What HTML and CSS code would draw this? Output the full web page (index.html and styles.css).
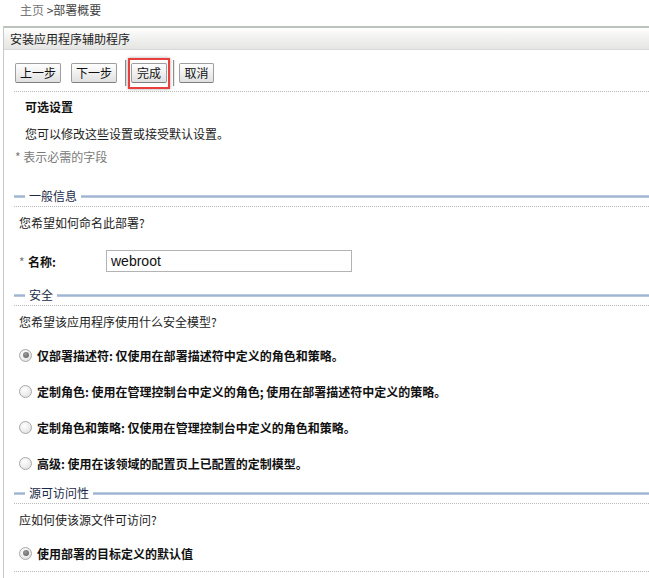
FILE: index.html
```html
<!DOCTYPE html>
<html lang="zh-CN">
<head>
<meta charset="utf-8">
<title>部署概要</title>
<link rel="stylesheet" href="styles.css">
</head>
<body>
<div class="crumb"><span class="crumb-home">主页</span> &gt;部署概要</div>
<div class="panel">
  <div class="panel-head">安装应用程序辅助程序</div>
  <div class="panel-body">
    <div class="toolbar">
      <button class="btn btn-3">上一步</button>
      <button class="btn btn-3 gap">下一步</button>
      <span class="sep sep-a"></span>
      <span class="mark"><button class="btn btn-2">完成</button></span>
      <span class="sep sep-b"></span>
      <button class="btn btn-2">取消</button>
    </div>
    <div class="dots d-top"></div>
    <div class="intro-title">可选设置</div>
    <div class="intro-desc">您可以修改这些设置或接受默认设置。</div>
    <div class="req">* 表示必需的字段</div>

    <div class="sec s1"><span class="sec-l"></span><span class="sec-t">一般信息</span><span class="sec-r"></span></div>
    <div class="q">您希望如何命名此部署?</div>
    <div class="name-row">
      <span class="star">*</span><span class="name-label">名称:</span>
      <input class="name-input" type="text" value="webroot">
    </div>

    <div class="sec s2"><span class="sec-l"></span><span class="sec-t">安全</span><span class="sec-r"></span></div>
    <div class="q">您希望该应用程序使用什么安全模型?</div>
    <label class="opt o-first"><span class="radio on"></span>仅部署描述符: 仅使用在部署描述符中定义的角色和策略。</label>
    <label class="opt"><span class="radio"></span>定制角色: 使用在管理控制台中定义的角色; 使用在部署描述符中定义的策略。</label>
    <label class="opt"><span class="radio"></span>定制角色和策略: 仅使用在管理控制台中定义的角色和策略。</label>
    <label class="opt"><span class="radio"></span>高级: 使用在该领域的配置页上已配置的定制模型。</label>

    <div class="sec s3"><span class="sec-l"></span><span class="sec-t">源可访问性</span><span class="sec-r"></span></div>
    <div class="q">应如何使该源文件可访问?</div>
    <label class="opt o-src"><span class="radio on"></span>使用部署的目标定义的默认值</label>
    <div class="dots d-bottom"></div>
  </div>
</div>
</body>
</html>
```
FILE: styles.css
```css
html, body {
  margin: 0;
  padding: 0;
  background: #fff;
}
body {
  width: 649px;
  overflow: hidden;
  font-family: "Noto Sans CJK SC", "Liberation Sans", sans-serif;
  font-size: 12px;
  color: #222;
}
.crumb {
  height: 26px;
  line-height: 20px;
  padding-left: 20px;
  color: #444;
}
.crumb-home { color: #777; }

.panel {
  margin-left: 3px;
  border-top: 2px solid #bcc3bc;
  border-left: 1px solid #c9c9c9;
}
.panel-head {
  height: 21px;
  line-height: 21px;
  padding-left: 6px;
  color: #222;
  background: linear-gradient(#ffffff, #f3f3f2 40%, #e5e6e3);
  border-bottom: 1px solid #d8d8d6;
}
.panel-body {
  padding-left: 10px;
  padding-bottom: 10px;
}

.toolbar {
  display: flex;
  align-items: center;
  height: 30px;
  margin-top: 8px;
  padding-left: 1px;
}
.btn {
  height: 20px;
  padding: 0;
  font-family: inherit;
  font-size: 12px;
  line-height: 18px;
  color: #111;
  border: 1px solid #9e9e9e;
  border-bottom-color: #7f7f7f;
  border-radius: 2px;
  background: linear-gradient(#fefefe, #f0f0f0 50%, #e0e0e0);
}
.btn-3 { width: 46px; }
.btn-2 { width: 35px; }
.gap { margin-left: 10px; }
.sep {
  width: 1px;
  height: 26px;
  background: #8d8d8d;
  box-shadow: 1px 0 0 #e8e8e8;
}
.sep-a { margin-left: 8px; }
.sep-b { margin-left: 3px; margin-right: 5px; }
.mark {
  display: flex;
  align-items: center;
  justify-content: center;
  width: 38px;
  height: 27px;
  margin-left: 2px;
  border: 2px solid #e8403c;
  box-shadow: 0 0 3px rgba(0, 0, 0, 0.35);
}
.mark .btn { width: 36px; }

.dots {
  border-top: 1px dotted #b9b9b9;
}
.d-top { margin-top: 3px; }
.d-bottom { margin-top: 8px; }

.intro-title {
  margin-top: 5px;
  padding-left: 11px;
  line-height: 20px;
  font-weight: bold;
  color: #111;
}
.intro-desc {
  margin-top: 7px;
  padding-left: 11px;
  line-height: 20px;
  color: #222;
}
.req {
  margin-top: 3px;
  padding-left: 1px;
  line-height: 20px;
  color: #7a7a7a;
}

.sec {
  display: flex;
  align-items: center;
  height: 20px;
  border-bottom: 1px dotted #b9b9b9;
}
.s1 { margin-top: 19px; }
.s2 { margin-top: 13px; }
.s3 { margin-top: 10px; }
.sec-l, .sec-r {
  height: 3px;
  background: linear-gradient(#c9d6e6, #9fb5d1 50%, #c2d0e2);
}
.sec-l { width: 11px; }
.sec-r { flex: 1; }
.sec-t {
  padding: 0 4px;
  color: #1b2a48;
  line-height: 20px;
}

.q {
  margin-top: 6px;
  padding-left: 5px;
  line-height: 20px;
  color: #222;
}

.name-row {
  display: flex;
  align-items: center;
  height: 22px;
  margin-top: 17px;
  padding-left: 5px;
}
.star {
  color: #777;
  width: 9px;
}
.name-label {
  width: 78px;
  font-weight: bold;
  color: #111;
}
.name-input {
  box-sizing: border-box;
  width: 246px;
  height: 22px;
  margin: 0;
  padding: 0 4px;
  border: 1px solid #b3b3b3;
  font-family: "Liberation Sans", Arial, sans-serif;
  font-size: 14px;
  color: #111;
  outline: none;
}

.opt {
  display: flex;
  align-items: center;
  height: 20px;
  margin-top: 16px;
  padding-left: 5px;
  font-weight: bold;
  color: #111;
}
.o-first { margin-top: 13px; }
.o-src { margin-top: 13px; }
.radio {
  position: relative;
  box-sizing: border-box;
  width: 13px;
  height: 13px;
  margin-right: 5px;
  border-radius: 50%;
  border: 1px solid #a9a9a9;
  background: radial-gradient(circle at 40% 35%, #ffffff, #ececec 55%, #d6d6d6);
}
.radio.on::after {
  content: "";
  position: absolute;
  left: 2.5px;
  top: 2.5px;
  width: 6px;
  height: 6px;
  border-radius: 50%;
  background: radial-gradient(circle at 40% 35%, #9a9a9a, #5c5c5c);
}
```
